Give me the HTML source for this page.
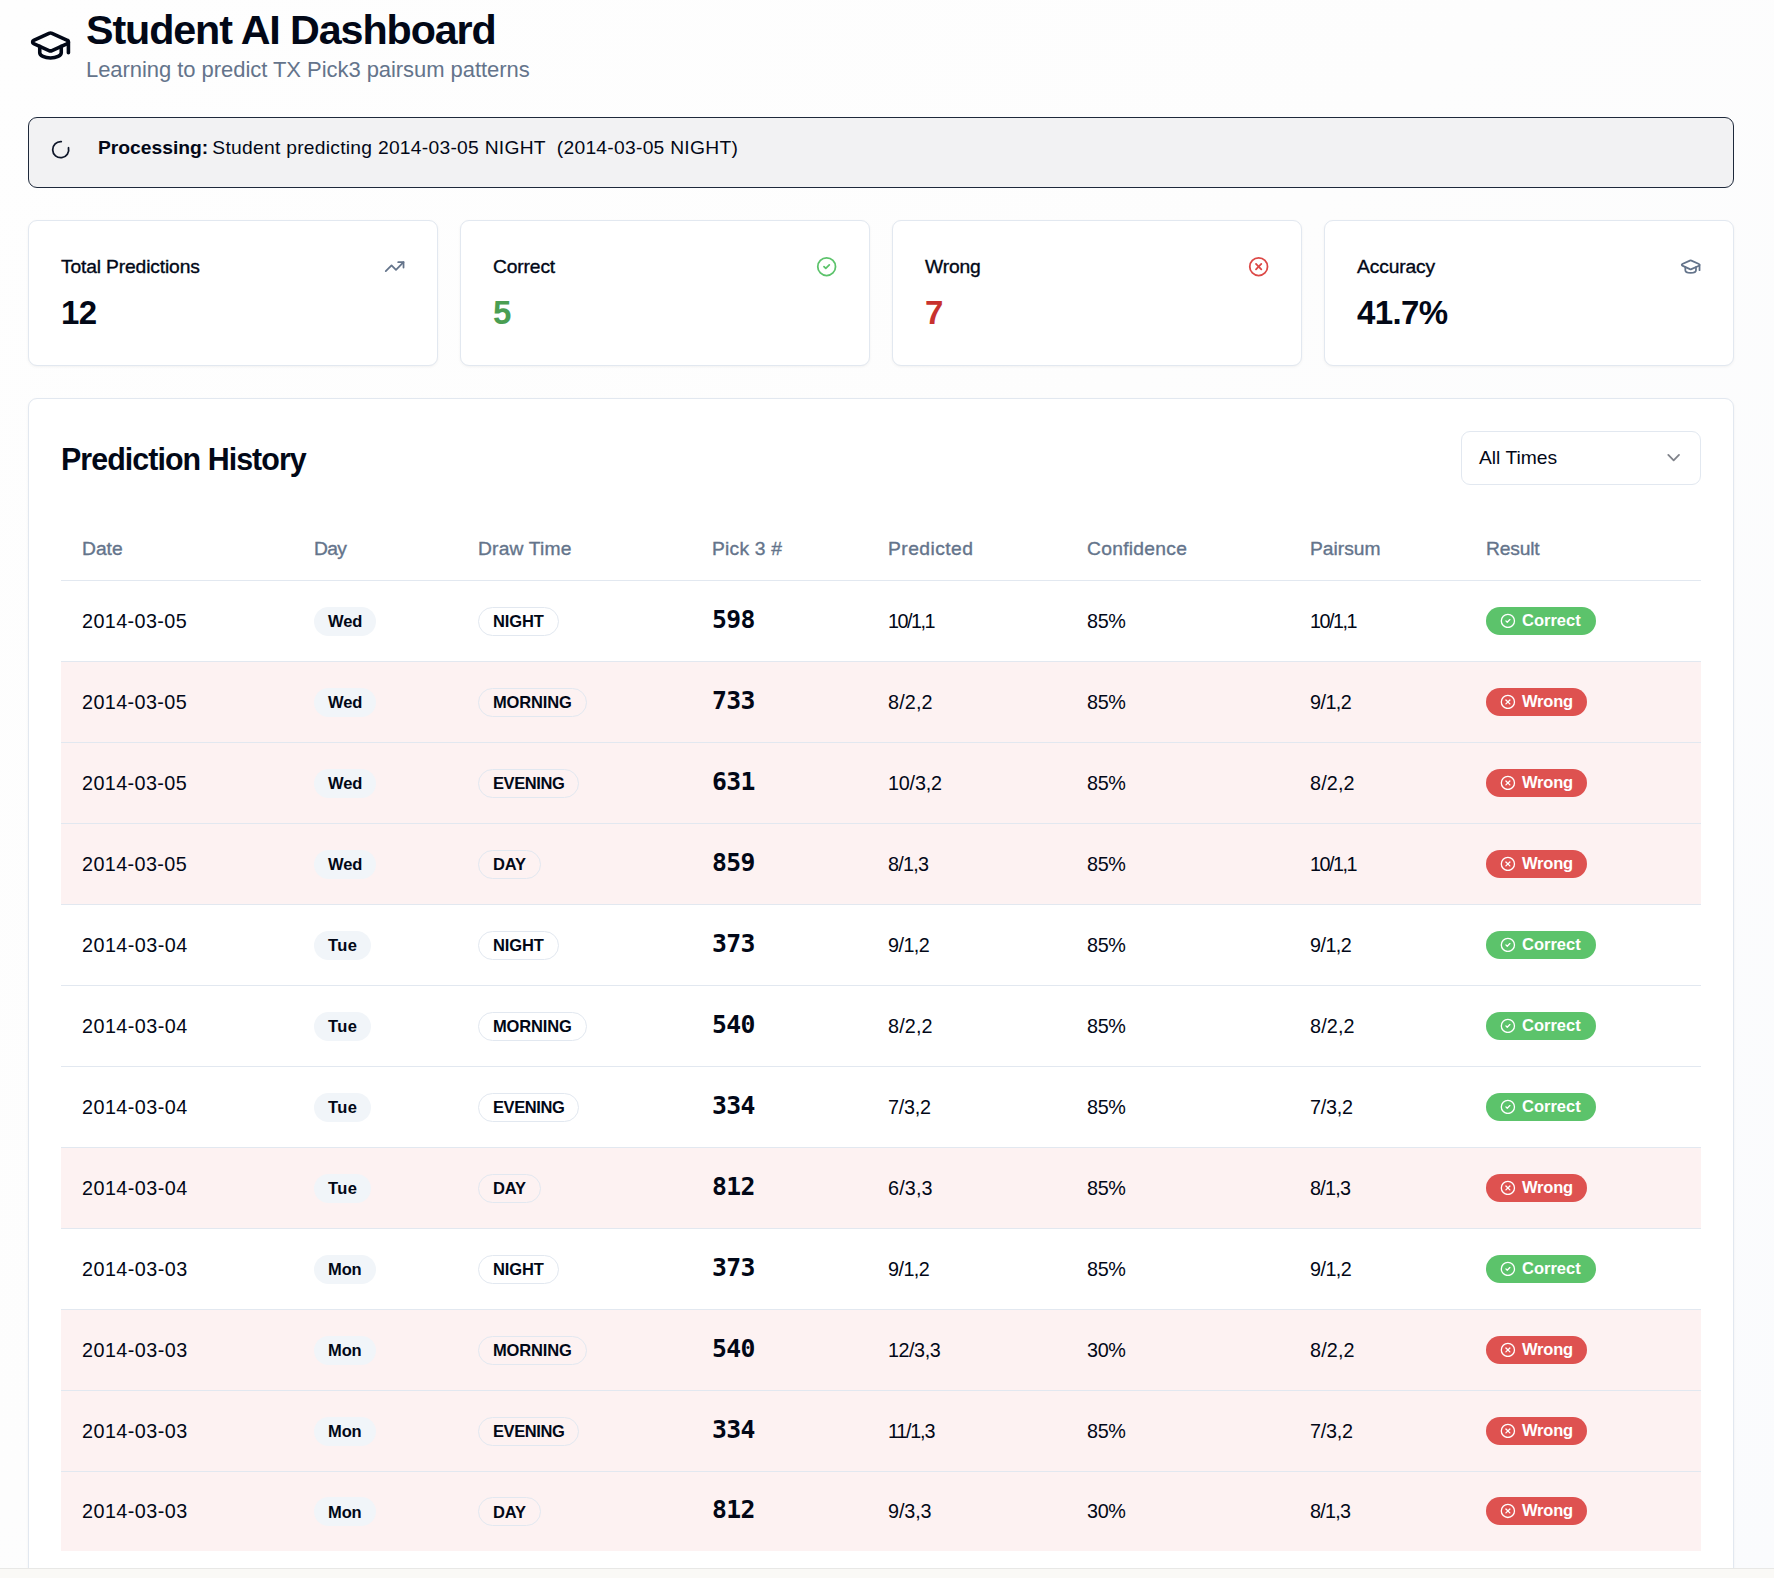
<!DOCTYPE html>
<html lang="en">
<head>
<meta charset="utf-8">
<title>Student AI Dashboard</title>
<style>
*{box-sizing:border-box;margin:0;padding:0}
html,body{width:1774px;height:1578px;overflow:hidden}
body{position:relative;font-family:"Liberation Sans",Arial,sans-serif;color:#020817;
  background:linear-gradient(135deg,#fefefe 0%,#fdfdfd 45%,#fafbfd 100%);
  -webkit-font-smoothing:antialiased}
.abs{position:absolute}
svg{display:block;fill:none;stroke:currentColor;stroke-width:2;stroke-linecap:round;stroke-linejoin:round}

/* header */
.cap{left:28.5px;top:24px;width:43px;height:43px;color:#020817}
h1{position:absolute;left:86px;top:6px;font-size:41.25px;line-height:49.5px;font-weight:700;white-space:nowrap;letter-spacing:-1.1px}
.sub{position:absolute;left:86px;top:55px;font-size:22px;line-height:30px;color:#64748b;white-space:nowrap;letter-spacing:-.05px}

/* alert */
.alert{left:28px;top:117px;width:1706px;height:71px;border:1px solid #1e293b;border-radius:9px;background:#f2f2f3}
.spin{left:21.1px;top:20.9px;width:21.4px;height:21.4px;color:#0f172a;transform:rotate(-14deg)}
.alert p{position:absolute;left:69px;top:16px;font-size:19.25px;line-height:28px;white-space:nowrap}
.alert b{font-weight:700}
.alert span{letter-spacing:.267px;margin-left:-1.5px}

/* stat cards */
.card{position:absolute;background:#fff;border:1px solid #e2e8f0;border-radius:9px;box-shadow:0 1px 3px rgba(0,0,0,.05)}
.stat{top:220px;width:410px;height:146px}
.stat .lbl{position:absolute;left:32px;top:32px;font-size:19.25px;line-height:28px;font-weight:400;white-space:nowrap;-webkit-text-stroke:.35px currentColor;letter-spacing:-.15px}
.stat .val{position:absolute;left:32px;top:70px;font-size:33px;line-height:44px;font-weight:700;white-space:nowrap;letter-spacing:-.6px}
.stat svg{position:absolute;right:31.4px;top:35.3px;width:21.3px;height:21.3px}

/* table card */
.tcard{left:28px;top:398px;width:1706px;height:1200px}
.ttl{position:absolute;left:32px;top:38px;font-size:32px;line-height:44px;font-weight:700;white-space:nowrap;letter-spacing:-1px;transform:scaleX(.95);transform-origin:0 0}
.sel{position:absolute;left:1432px;top:32px;width:240px;height:54px;border:1px solid #e2e8f0;border-radius:9px;background:#fff}
.sel span{position:absolute;left:17px;top:12px;font-size:19.25px;line-height:28px;white-space:nowrap}
.sel svg{position:absolute;right:15.4px;top:15.2px;width:21.3px;height:21.3px;color:#020817;opacity:.5}

.thead{position:absolute;left:32px;top:117px;width:1640px;height:65px;border-bottom:1px solid #e2e8f0}
.thead span{position:absolute;top:19px;font-size:19.25px;line-height:28px;color:#64748b;white-space:nowrap;-webkit-text-stroke:.35px currentColor}
.row{position:absolute;left:32px;width:1640px;height:81px;border-bottom:1px solid #e2e8f0}
.row.w{background:#fdf2f2}
.row>*{position:absolute;top:0;height:80px;max-height:100%;display:flex;align-items:center;white-space:nowrap;font-size:19.8px}
.c1{left:21px}.c2{left:253px}.c3{left:417px}.c4{left:651px}.c5{left:827px}.c6{left:1026px}.c7{left:1249px}.c8{left:1425px}
.row .c4{font-family:"DejaVu Sans Mono","Liberation Mono",monospace;font-weight:700;font-size:24.75px;letter-spacing:-.7px;padding-bottom:4px}
.bd{display:inline-flex;align-items:center;height:29px;border-radius:15px;padding:0 14px;font-size:16.5px;font-weight:700;line-height:22px}
.bd.day{background:#f1f5f9}
.bd.out{border:1px solid #e2e8f0;background:transparent}
.bd.ok{background:#5cc36b;color:#fff;height:28px;margin-bottom:1px;padding-bottom:2px;padding-right:15px}
.bd.no{background:#de5250;color:#fff;height:28px;margin-bottom:1px;padding-bottom:2px}
.bd svg{width:15.8px;height:15.8px;margin-left:.4px;margin-right:5.8px;position:relative;top:1px}
.bar{left:0;top:1568px;width:1774px;height:10px;background:#faf9f6;border-top:1px solid #e8e8e6}
</style>
</head>
<body>

<svg class="abs cap" viewBox="0 0 24 24"><path d="M21.42 10.922a1 1 0 0 0-.019-1.838L12.83 5.18a2 2 0 0 0-1.66 0L2.6 9.08a1 1 0 0 0 0 1.832l8.57 3.908a2 2 0 0 0 1.66 0z"/><path d="M22 10v6"/><path d="M6 12.5V16a6 3 0 0 0 12 0v-3.5"/></svg>
<h1>Student AI Dashboard</h1>
<p class="sub">Learning to predict TX Pick3 pairsum patterns</p>

<div class="abs alert">
  <svg class="abs spin" viewBox="0 0 24 24"><path d="M21 12a9 9 0 1 1-6.219-8.56"/></svg>
  <p><b>Processing:</b><span> Student predicting 2014-03-05 NIGHT &nbsp;(2014-03-05 NIGHT)</span></p>
</div>

<div class="card stat" style="left:28px">
  <div class="lbl">Total Predictions</div>
  <svg viewBox="0 0 24 24" style="color:#64748b"><polyline points="22 7 13.5 15.5 8.5 10.5 2 17"/><polyline points="16 7 22 7 22 13"/></svg>
  <div class="val">12</div>
</div>
<div class="card stat" style="left:460px">
  <div class="lbl">Correct</div>
  <svg viewBox="0 0 24 24" style="color:#5cc36b"><circle cx="12" cy="12" r="10"/><path d="m9 12 2 2 4-4"/></svg>
  <div class="val" style="color:#4a9e52">5</div>
</div>
<div class="card stat" style="left:892px">
  <div class="lbl">Wrong</div>
  <svg viewBox="0 0 24 24" style="color:#dc4846"><circle cx="12" cy="12" r="10"/><path d="m15 9-6 6"/><path d="m9 9 6 6"/></svg>
  <div class="val" style="color:#c8322e">7</div>
</div>
<div class="card stat" style="left:1324px">
  <div class="lbl">Accuracy</div>
  <svg viewBox="0 0 24 24" style="color:#64748b"><path d="M21.42 10.922a1 1 0 0 0-.019-1.838L12.83 5.18a2 2 0 0 0-1.66 0L2.6 9.08a1 1 0 0 0 0 1.832l8.57 3.908a2 2 0 0 0 1.66 0z"/><path d="M22 10v6"/><path d="M6 12.5V16a6 3 0 0 0 12 0v-3.5"/></svg>
  <div class="val">41.7%</div>
</div>

<div class="card tcard">
  <div class="ttl">Prediction History</div>
  <div class="sel"><span>All Times</span><svg viewBox="0 0 24 24"><path d="m6 9 6 6 6-6"/></svg></div>
  <div class="thead">
    <span class="c1">Date</span><span class="c2" style="letter-spacing:-.7px">Day</span><span class="c3" style="letter-spacing:.17px">Draw Time</span><span class="c4" style="letter-spacing:.22px">Pick 3 #</span><span class="c5" style="letter-spacing:.45px">Predicted</span><span class="c6" style="letter-spacing:.28px">Confidence</span><span class="c7">Pairsum</span><span class="c8" style="letter-spacing:-.2px">Result</span>
  </div>
  <div class="row" style="top:182px"><div class="c1" style="letter-spacing:0.39px">2014-03-05</div><div class="c2"><span class="bd day" style="letter-spacing:-0.1px">Wed</span></div><div class="c3"><span class="bd out" style="letter-spacing:-0.1px">NIGHT</span></div><div class="c4">598</div><div class="c5" style="letter-spacing:-1.52px">10/1,1</div><div class="c6" style="letter-spacing:-0.35px">85%</div><div class="c7" style="letter-spacing:-1.52px">10/1,1</div><div class="c8"><span class="bd ok"><svg viewBox="0 0 24 24"><circle cx="12" cy="12" r="10"/><path d="m9 12 2 2 4-4"/></svg>Correct</span></div></div>
  <div class="row w" style="top:263px"><div class="c1" style="letter-spacing:0.39px">2014-03-05</div><div class="c2"><span class="bd day" style="letter-spacing:-0.1px">Wed</span></div><div class="c3"><span class="bd out" style="letter-spacing:-0.15px">MORNING</span></div><div class="c4">733</div><div class="c5" style="letter-spacing:0.15px">8/2,2</div><div class="c6" style="letter-spacing:-0.35px">85%</div><div class="c7" style="letter-spacing:-0.55px">9/1,2</div><div class="c8"><span class="bd no" style="letter-spacing:-.2px"><svg viewBox="0 0 24 24"><circle cx="12" cy="12" r="10"/><path d="m15 9-6 6"/><path d="m9 9 6 6"/></svg>Wrong</span></div></div>
  <div class="row w" style="top:344px"><div class="c1" style="letter-spacing:0.39px">2014-03-05</div><div class="c2"><span class="bd day" style="letter-spacing:-0.1px">Wed</span></div><div class="c3"><span class="bd out" style="letter-spacing:-0.4px">EVENING</span></div><div class="c4">631</div><div class="c5" style="letter-spacing:-0.2px">10/3,2</div><div class="c6" style="letter-spacing:-0.35px">85%</div><div class="c7" style="letter-spacing:0.15px">8/2,2</div><div class="c8"><span class="bd no" style="letter-spacing:-.2px"><svg viewBox="0 0 24 24"><circle cx="12" cy="12" r="10"/><path d="m15 9-6 6"/><path d="m9 9 6 6"/></svg>Wrong</span></div></div>
  <div class="row w" style="top:425px"><div class="c1" style="letter-spacing:0.39px">2014-03-05</div><div class="c2"><span class="bd day" style="letter-spacing:-0.1px">Wed</span></div><div class="c3"><span class="bd out" style="letter-spacing:-0.1px">DAY</span></div><div class="c4">859</div><div class="c5" style="letter-spacing:-0.72px">8/1,3</div><div class="c6" style="letter-spacing:-0.35px">85%</div><div class="c7" style="letter-spacing:-1.52px">10/1,1</div><div class="c8"><span class="bd no" style="letter-spacing:-.2px"><svg viewBox="0 0 24 24"><circle cx="12" cy="12" r="10"/><path d="m15 9-6 6"/><path d="m9 9 6 6"/></svg>Wrong</span></div></div>
  <div class="row" style="top:506px"><div class="c1" style="letter-spacing:0.45px">2014-03-04</div><div class="c2"><span class="bd day" style="letter-spacing:0.35px">Tue</span></div><div class="c3"><span class="bd out" style="letter-spacing:-0.1px">NIGHT</span></div><div class="c4">373</div><div class="c5" style="letter-spacing:-0.55px">9/1,2</div><div class="c6" style="letter-spacing:-0.35px">85%</div><div class="c7" style="letter-spacing:-0.55px">9/1,2</div><div class="c8"><span class="bd ok"><svg viewBox="0 0 24 24"><circle cx="12" cy="12" r="10"/><path d="m9 12 2 2 4-4"/></svg>Correct</span></div></div>
  <div class="row" style="top:587px"><div class="c1" style="letter-spacing:0.45px">2014-03-04</div><div class="c2"><span class="bd day" style="letter-spacing:0.35px">Tue</span></div><div class="c3"><span class="bd out" style="letter-spacing:-0.15px">MORNING</span></div><div class="c4">540</div><div class="c5" style="letter-spacing:0.15px">8/2,2</div><div class="c6" style="letter-spacing:-0.35px">85%</div><div class="c7" style="letter-spacing:0.15px">8/2,2</div><div class="c8"><span class="bd ok"><svg viewBox="0 0 24 24"><circle cx="12" cy="12" r="10"/><path d="m9 12 2 2 4-4"/></svg>Correct</span></div></div>
  <div class="row" style="top:668px"><div class="c1" style="letter-spacing:0.45px">2014-03-04</div><div class="c2"><span class="bd day" style="letter-spacing:0.35px">Tue</span></div><div class="c3"><span class="bd out" style="letter-spacing:-0.4px">EVENING</span></div><div class="c4">334</div><div class="c5" style="letter-spacing:-0.22px">7/3,2</div><div class="c6" style="letter-spacing:-0.35px">85%</div><div class="c7" style="letter-spacing:-0.22px">7/3,2</div><div class="c8"><span class="bd ok"><svg viewBox="0 0 24 24"><circle cx="12" cy="12" r="10"/><path d="m9 12 2 2 4-4"/></svg>Correct</span></div></div>
  <div class="row w" style="top:749px"><div class="c1" style="letter-spacing:0.45px">2014-03-04</div><div class="c2"><span class="bd day" style="letter-spacing:0.35px">Tue</span></div><div class="c3"><span class="bd out" style="letter-spacing:-0.1px">DAY</span></div><div class="c4">812</div><div class="c5" style="letter-spacing:0.15px">6/3,3</div><div class="c6" style="letter-spacing:-0.35px">85%</div><div class="c7" style="letter-spacing:-0.72px">8/1,3</div><div class="c8"><span class="bd no" style="letter-spacing:-.2px"><svg viewBox="0 0 24 24"><circle cx="12" cy="12" r="10"/><path d="m15 9-6 6"/><path d="m9 9 6 6"/></svg>Wrong</span></div></div>
  <div class="row" style="top:830px"><div class="c1" style="letter-spacing:0.45px">2014-03-03</div><div class="c2"><span class="bd day" style="letter-spacing:-0.1px">Mon</span></div><div class="c3"><span class="bd out" style="letter-spacing:-0.1px">NIGHT</span></div><div class="c4">373</div><div class="c5" style="letter-spacing:-0.55px">9/1,2</div><div class="c6" style="letter-spacing:-0.35px">85%</div><div class="c7" style="letter-spacing:-0.55px">9/1,2</div><div class="c8"><span class="bd ok"><svg viewBox="0 0 24 24"><circle cx="12" cy="12" r="10"/><path d="m9 12 2 2 4-4"/></svg>Correct</span></div></div>
  <div class="row w" style="top:911px"><div class="c1" style="letter-spacing:0.45px">2014-03-03</div><div class="c2"><span class="bd day" style="letter-spacing:-0.1px">Mon</span></div><div class="c3"><span class="bd out" style="letter-spacing:-0.15px">MORNING</span></div><div class="c4">540</div><div class="c5" style="letter-spacing:-0.46px">12/3,3</div><div class="c6" style="letter-spacing:-0.35px">30%</div><div class="c7" style="letter-spacing:0.15px">8/2,2</div><div class="c8"><span class="bd no" style="letter-spacing:-.2px"><svg viewBox="0 0 24 24"><circle cx="12" cy="12" r="10"/><path d="m15 9-6 6"/><path d="m9 9 6 6"/></svg>Wrong</span></div></div>
  <div class="row w" style="top:992px"><div class="c1" style="letter-spacing:0.45px">2014-03-03</div><div class="c2"><span class="bd day" style="letter-spacing:-0.1px">Mon</span></div><div class="c3"><span class="bd out" style="letter-spacing:-0.4px">EVENING</span></div><div class="c4">334</div><div class="c5" style="letter-spacing:-1.23px">11/1,3</div><div class="c6" style="letter-spacing:-0.35px">85%</div><div class="c7" style="letter-spacing:-0.22px">7/3,2</div><div class="c8"><span class="bd no" style="letter-spacing:-.2px"><svg viewBox="0 0 24 24"><circle cx="12" cy="12" r="10"/><path d="m15 9-6 6"/><path d="m9 9 6 6"/></svg>Wrong</span></div></div>
  <div class="row w" style="top:1073px;border-bottom:0;height:79px"><div class="c1" style="letter-spacing:0.45px">2014-03-03</div><div class="c2"><span class="bd day" style="letter-spacing:-0.1px">Mon</span></div><div class="c3"><span class="bd out" style="letter-spacing:-0.1px">DAY</span></div><div class="c4">812</div><div class="c5" style="letter-spacing:-0.1px">9/3,3</div><div class="c6" style="letter-spacing:-0.35px">30%</div><div class="c7" style="letter-spacing:-0.72px">8/1,3</div><div class="c8"><span class="bd no" style="letter-spacing:-.2px"><svg viewBox="0 0 24 24"><circle cx="12" cy="12" r="10"/><path d="m15 9-6 6"/><path d="m9 9 6 6"/></svg>Wrong</span></div></div>
</div>

<div class="abs bar"></div>
</body>
</html>
